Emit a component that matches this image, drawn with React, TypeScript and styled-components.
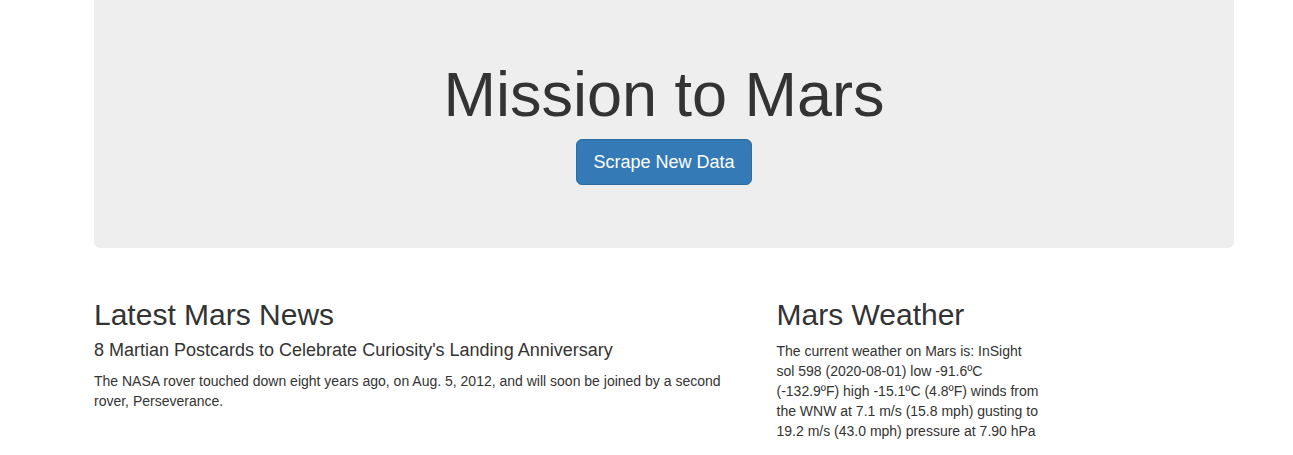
import React from "react";
import styled, { createGlobalStyle } from "styled-components";

const Global = createGlobalStyle`
  html, body { margin: 0; padding: 0; background: #fff; }
  body {
    font-family: "Liberation Sans", Arial, Helvetica, sans-serif;
    font-size: 14px;
    line-height: 1.42857143;
    color: #333;
  }
  * { box-sizing: border-box; }
`;

const Container = styled.div`
  width: 1170px;
  margin-left: 79px;
  margin-top: -8px;
  padding: 0 15px;
`;

const Jumbotron = styled.div`
  background: #eee;
  border-radius: 6px;
  padding: 48px 60px;
  margin-bottom: 30px;
  text-align: center;
`;

const Title = styled.h1`
  font-size: 63px;
  font-weight: 500;
  line-height: 1.1;
  margin: 20px 0 10px;
  color: #333;
`;

const ButtonRow = styled.p`
  margin: 0 0 15px;
`;

const PrimaryButton = styled.button`
  display: inline-block;
  font-family: inherit;
  font-size: 18px;
  line-height: 1.3333333;
  padding: 10px 16px;
  border-radius: 6px;
  color: #fff;
  background: #337ab7;
  border: 1px solid #2e6da4;
  cursor: pointer;
`;

const Row = styled.div`
  display: grid;
  grid-template-columns: 7fr 5fr;
  margin: 0 -15px;
`;

const Col = styled.div`
  padding: 0 15px;
`;

const SectionTitle = styled.h2`
  font-size: 30px;
  font-weight: 500;
  line-height: 1.1;
  margin: 20px 0 10px;
`;

const Headline = styled.h4`
  font-size: 18px;
  font-weight: 500;
  line-height: 1.1;
  margin: 0 0 10px;
`;

const Text = styled.p<{ $width?: number }>`
  margin: 0 0 10px;
  ${(p) => (p.$width ? `width: ${p.$width}px;` : "")}
`;

export default function App() {
  return (
    <>
      <Global />
      <Container>
        <Jumbotron>
          <Title>Mission to Mars</Title>
          <ButtonRow>
            <PrimaryButton>Scrape New Data</PrimaryButton>
          </ButtonRow>
        </Jumbotron>
        <Row>
          <Col>
            <SectionTitle>Latest Mars News</SectionTitle>
            <Headline>8 Martian Postcards to Celebrate Curiosity's Landing Anniversary</Headline>
            <Text>
              The NASA rover touched down eight years ago, on Aug. 5, 2012, and will soon be joined by a second rover, Perseverance.
            </Text>
          </Col>
          <Col>
            <SectionTitle>Mars Weather</SectionTitle>
            <Text $width={263}>
              The current weather on Mars is: InSight sol 598 (2020-08-01) low -91.6ºC (-132.9ºF) high -15.1ºC (4.8ºF) winds from the WNW at 7.1 m/s (15.8 mph) gusting to 19.2 m/s (43.0 mph) pressure at 7.90 hPa
            </Text>
          </Col>
        </Row>
      </Container>
    </>
  );
}
